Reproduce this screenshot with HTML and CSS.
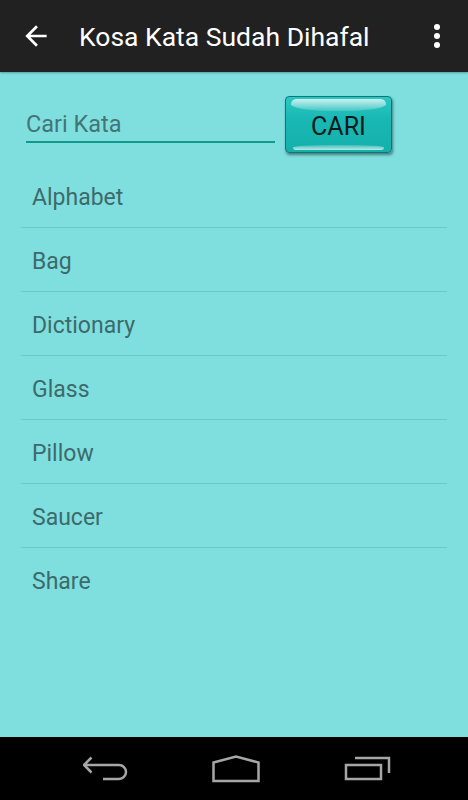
FILE: index.html
```html
<!DOCTYPE html>
<html lang="id">
<head>
    <meta charset="UTF-8">
    <meta name="viewport" content="width=device-width, initial-scale=1.0">
    <title>Kosa Kata Sudah Dihafal</title>
    <link rel="stylesheet" href="styles.css">
</head>
<body>

    <header class="appbar">
        <svg class="back" viewBox="0 0 24 24" width="32" height="32">
            <path d="M20 11H7.83l5.59-5.59L12 4l-8 8 8 8 1.41-1.41L7.83 13H20v-2z" fill="#fff"/>
        </svg>
        <h1 class="title">Kosa Kata Sudah Dihafal</h1>
        <svg class="menu" viewBox="0 0 8 26" width="8" height="26">
            <circle cx="4" cy="4" r="3" fill="#fff"/>
            <circle cx="4" cy="13" r="3" fill="#fff"/>
            <circle cx="4" cy="22" r="3" fill="#fff"/>
        </svg>
    </header>

    <main class="content">
        <div class="search">
            <input class="search-input" type="text" placeholder="Cari Kata">
            <button class="search-btn" type="button">CARI</button>
        </div>

        <ul class="words">
            <li>Alphabet</li>
            <li>Bag</li>
            <li>Dictionary</li>
            <li>Glass</li>
            <li>Pillow</li>
            <li>Saucer</li>
            <li>Share</li>
        </ul>
    </main>

    <!-- system navigation bar -->
    <nav class="navbar">
        <svg width="45" height="27" viewBox="0 0 45 27">
            <path d="M8.5 2.5L1 10l7.5 7.5M1 10h35a7 7 0 0 1 0 14H20" fill="none" stroke="#a6a6a6" stroke-width="2.5"/>
        </svg>
        <svg width="48" height="28" viewBox="0 0 48 28">
            <path d="M1.5 26V7.5L24 1.5l22.5 6V26z" fill="none" stroke="#a6a6a6" stroke-width="2.5"/>
        </svg>
        <svg width="47" height="25" viewBox="0 0 47 25">
            <rect x="2" y="9" width="35" height="14" fill="none" stroke="#a6a6a6" stroke-width="2.5"/>
            <path d="M11 2h34v15" fill="none" stroke="#a6a6a6" stroke-width="2.5"/>
        </svg>
    </nav>

</body>
</html>
```

FILE: styles.css
```css
body {
    margin: 0;
    height: 800px;
    display: flex;
    flex-direction: column;
    font-family: Roboto, "Noto Sans", sans-serif;
    background-color: #7fdfdf;
}
.appbar {
    height: 72px;
    flex-shrink: 0;
    display: flex;
    align-items: center;
    background-color: #212121;
    box-shadow: 0 1px 2px rgba(0, 0, 0, 0.3);
}
.back {
    margin-left: 20px;
}
.title {
    margin: 0 0 0 27px;
    flex: 1;
    color: #fff;
    font-size: 26.5px;
    font-weight: 400;
}
.menu {
    margin-right: 27px;
}
.content {
    flex: 1;
    padding: 24px 21px 0;
}
.search {
    display: flex;
    align-items: flex-start;
    padding-left: 5px;
}
.search-input {
    width: 249px;
    height: 46px;
    margin-top: 1px;
    padding: 10px 0 0;
    box-sizing: border-box;
    border: none;
    border-bottom: 2px solid #119a8d;
    background: transparent;
    font-family: Roboto, sans-serif;
    font-size: 23.5px;
    color: #3b6b6b;
    outline: none;
}
.search-input::placeholder {
    color: #447575;
}
.search-btn {
    position: relative;
    width: 107px;
    height: 57px;
    margin-left: 10px;
    padding: 4px 0 0;
    border: 1px solid #0a7875;
    border-radius: 4px;
    background: linear-gradient(#2dc7c3, #19b8b4 40%, #15b0ac);
    box-shadow: 1px 2px 3px rgba(0, 0, 0, 0.45);
    font-family: Roboto, sans-serif;
    font-size: 25px;
    color: #0c1a1a;
    cursor: pointer;
    overflow: hidden;
}
.search-btn::before {
    content: "";
    position: absolute;
    left: 5px;
    right: 5px;
    top: 2px;
    height: 12px;
    border-radius: 6px 6px 50% 50% / 6px 6px 8px 8px;
    background: linear-gradient(rgba(255, 255, 255, 0.75), rgba(255, 255, 255, 0.15));
}
.search-btn::after {
    content: "";
    position: absolute;
    left: 7px;
    right: 7px;
    bottom: 2px;
    height: 5px;
    border-radius: 50% 50% 3px 3px;
    background: linear-gradient(rgba(255, 255, 255, 0.2), rgba(255, 255, 255, 0.7));
}
.words {
    list-style: none;
    margin: 11px 0 0;
    padding: 0;
}
.words li {
    height: 64px;
    box-sizing: border-box;
    display: flex;
    align-items: center;
    padding: 3px 0 0 11px;
    font-size: 23px;
    color: #3d6a6a;
    border-bottom: 1px solid #6ac9ca;
}
.words li:last-child {
    border-bottom: none;
}
.navbar {
    height: 63px;
    flex-shrink: 0;
    display: flex;
    align-items: center;
    gap: 84px;
    padding-left: 83px;
    background-color: #000;
}
```
